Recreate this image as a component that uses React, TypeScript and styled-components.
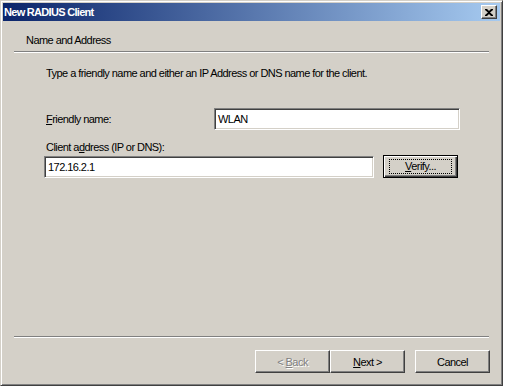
import styled, { createGlobalStyle } from 'styled-components';

const GlobalStyle = createGlobalStyle`
    html, body {
        margin: 0;
        padding: 0;
        background: #ffffff;
    }
    body {
        font-family: "Liberation Sans", Arial, sans-serif;
        font-size: 11px;
        letter-spacing: -0.55px;
        color: #000000;
    }
`;

const Window = styled.div`
    width: 503px;
    height: 386px;
    box-sizing: border-box;
    background: #d4d0c8;
    border-top: 1px solid #d4d0c8;
    border-left: 1px solid #d4d0c8;
    border-right: 1px solid #404040;
    border-bottom: 1px solid #404040;
    box-shadow: inset 1px 1px 0 #ffffff, inset -1px -1px 0 #808080;
    padding: 2px;
    display: flex;
    flex-direction: column;
`;

const TitleBar = styled.div`
    height: 18px;
    flex: none;
    display: flex;
    align-items: center;
    justify-content: space-between;
    padding: 0 3px 0 1px;
    background: linear-gradient(to right, #0a246a, #a6caf0);
    color: #ffffff;
    font-weight: bold;
    font-size: 11px;
    letter-spacing: -0.7px;
`;

const CloseButton = styled.div`
    width: 16px;
    height: 14px;
    box-sizing: border-box;
    background: #d4d0c8;
    border-top: 1px solid #ffffff;
    border-left: 1px solid #ffffff;
    border-right: 1px solid #404040;
    border-bottom: 1px solid #404040;
    box-shadow: inset -1px -1px 0 #808080;
    display: flex;
    align-items: center;
    justify-content: center;
`;

const Header = styled.div`
    flex: none;
    padding: 13px 0 0 23px;
    line-height: 13px;
`;

const Separator = styled.div<{ $top: number }>`
    flex: none;
    height: 0;
    margin: ${p => p.$top}px 11px 0 11px;
    border-top: 1px solid #808080;
    border-bottom: 1px solid #ffffff;
`;

const Body = styled.div`
    flex: 1;
    padding: 14px 0 0 41px;
    display: flex;
    flex-direction: column;
`;

const Text = styled.div<{ $top?: number }>`
    line-height: 13px;
    padding-left: 2px;
    margin-top: ${p => p.$top ?? 0}px;
`;

const Row = styled.div<{ $top: number }>`
    display: flex;
    align-items: center;
    margin-top: ${p => p.$top}px;
`;

const Label = styled.div`
    width: 168px;
    padding-left: 2px;
    line-height: 13px;
`;

const Input = styled.div<{ $width: number }>`
    width: ${p => p.$width}px;
    height: 22px;
    box-sizing: border-box;
    background: #ffffff;
    border-top: 1px solid #808080;
    border-left: 1px solid #808080;
    border-right: 1px solid #ffffff;
    border-bottom: 1px solid #ffffff;
    box-shadow: inset 1px 1px 0 #404040, inset -1px -1px 0 #d4d0c8;
    padding: 0 3px;
    display: flex;
    align-items: center;
`;

const Button = styled.div<{ $disabled?: boolean; $default?: boolean }>`
    width: 75px;
    height: 23px;
    box-sizing: border-box;
    background: #d4d0c8;
    border-top: 1px solid #ffffff;
    border-left: 1px solid #ffffff;
    border-right: 1px solid #404040;
    border-bottom: 1px solid #404040;
    box-shadow: inset -1px -1px 0 #808080;
    display: flex;
    align-items: center;
    justify-content: center;
    color: ${p => (p.$disabled ? '#808080' : '#000000')};
    text-shadow: ${p => (p.$disabled ? '1px 1px 0 #ffffff' : 'none')};
    ${p =>
        p.$default &&
        `
        border: 1px solid #000000;
        box-shadow: inset 1px 1px 0 #ffffff, inset -1px -1px 0 #404040, inset -2px -2px 0 #808080;
    `}
`;

const FocusRect = styled.div`
    width: 61px;
    height: 13px;
    border: 1px dotted #000000;
    display: flex;
    align-items: center;
    justify-content: center;
    line-height: 13px;
`;

const Key = styled.span`
    text-decoration: underline;
`;

const Footer = styled.div`
    flex: none;
    display: flex;
    justify-content: flex-end;
    padding: 12px 10px 10px 0;
`;

const Gap = styled.div<{ $width: number }>`
    width: ${p => p.$width}px;
`;

const App = () => {
    return (
        <>
            <GlobalStyle />
            <Window>
                <TitleBar>
                    <span>New RADIUS Client</span>
                    <CloseButton>
                        <svg width="8" height="7" viewBox="0 0 8 7">
                            <path d="M0 0h2l2 2 2-2h2v1L5 3.5 8 6v1H6L4 5 2 7H0V6l3-2.5L0 1z" fill="#000" />
                        </svg>
                    </CloseButton>
                </TitleBar>
                <Header>Name and Address</Header>
                <Separator $top={4} />
                <Body>
                    <Text>Type a friendly name and either an IP Address or DNS name for the client.</Text>
                    <Row $top={28}>
                        <Label><Key>F</Key>riendly name:</Label>
                        <Input $width={246}>WLAN</Input>
                    </Row>
                    <Text $top={11}>Client a<Key>d</Key>dress (IP or DNS):</Text>
                    <Row $top={1}>
                        <Input $width={330}>172.16.2.1</Input>
                        <Gap $width={9} />
                        <Button $default>
                            <FocusRect><span><Key>V</Key>erify...</span></FocusRect>
                        </Button>
                    </Row>
                </Body>
                <Separator $top={0} />
                <Footer>
                    <Button $disabled><span>&lt; <Key>B</Key>ack</span></Button>
                    <Button><span><Key>N</Key>ext &gt;</span></Button>
                    <Gap $width={10} />
                    <Button><span>Cancel</span></Button>
                </Footer>
            </Window>
        </>
    );
};

export default App;
